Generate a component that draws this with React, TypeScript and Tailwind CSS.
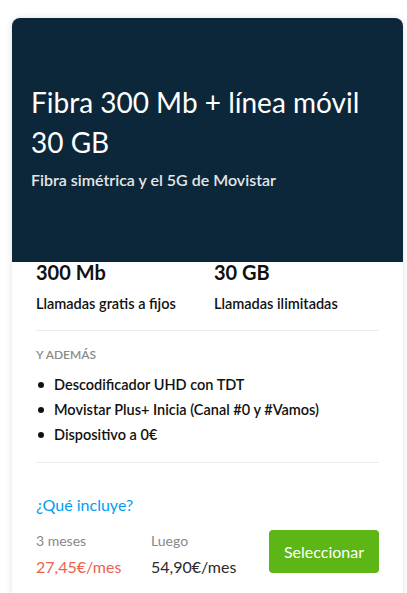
const bullets = ['Descodificador UHD con TDT', 'Movistar Plus+ Inicia (Canal #0 y #Vamos)', 'Dispositivo a 0€']

export default function App() {
  return (
    <div className="min-h-[593px] bg-white pt-[18px] pl-[12px] font-['Lato','Open_Sans',sans-serif]">
      <div className="w-[391px] rounded-t-[8px] bg-white shadow-[0_0_6px_rgba(0,0,0,0.12)]">
        <div className="h-[244px] rounded-t-[8px] bg-[#0c2739] px-[19px] pt-[64px]">
          <h1 className="text-[28px] leading-[40px] font-normal text-white">
            Fibra 300 Mb + línea móvil 30 GB
          </h1>
          <p className="mt-[8px] text-[16px] leading-[20px] font-semibold text-[#e4e6e8]">
            Fibra simétrica y el 5G de Movistar
          </p>
        </div>

        <div className="px-[24px] pb-[20px]">
          <div className="grid grid-cols-[178px_1fr]">
            <div>
              <div className="text-[20px] leading-[20px] font-bold text-[#111]">300 Mb</div>
              <div className="mt-[12px] text-[14.5px] leading-[20px] font-semibold text-[#111]">Llamadas gratis a fijos</div>
            </div>
            <div>
              <div className="text-[20px] leading-[20px] font-bold text-[#111]">30 GB</div>
              <div className="mt-[12px] text-[14.5px] leading-[20px] font-semibold text-[#111]">Llamadas ilimitadas</div>
            </div>
          </div>

          <div className="mt-[16px] h-px bg-[#ececec]" />

          <div className="mt-[16px] text-[12px] leading-[16px] font-semibold uppercase text-[#8a8a8a]">Y además</div>
          <ul className="mt-[12px] flex flex-col gap-[5px]">
            {bullets.map((b) => (
              <li key={b} className="flex items-center text-[14.5px] leading-[20px] font-semibold text-[#111]">
                <span className="ml-[2px] mr-[10px] h-[6px] w-[6px] rounded-full bg-[#111]" />
                {b}
              </li>
            ))}
          </ul>

          <div className="mt-[17px] h-px bg-[#ececec]" />

          <a className="mt-[30px] block text-[16px] leading-[24px] text-[#019df4]">¿Qué incluye?</a>

          <div className="mt-[14px] flex items-start">
            <div className="w-[115px]">
              <div className="text-[14px] leading-[20px] text-[#86888c]">3 meses</div>
              <div className="mt-[4px] text-[16px] leading-[24px] text-[#ec624f]">27,45€/mes</div>
            </div>
            <div className="w-[118px]">
              <div className="text-[14px] leading-[20px] text-[#86888c]">Luego</div>
              <div className="mt-[4px] text-[16px] leading-[24px] text-[#2b2b2b]">54,90€/mes</div>
            </div>
            <button className="-mt-[1px] h-[43px] w-[110px] rounded-[4px] bg-[#5cb615] text-[16px] text-white">
              Seleccionar
            </button>
          </div>
        </div>
      </div>
    </div>
  )
}
